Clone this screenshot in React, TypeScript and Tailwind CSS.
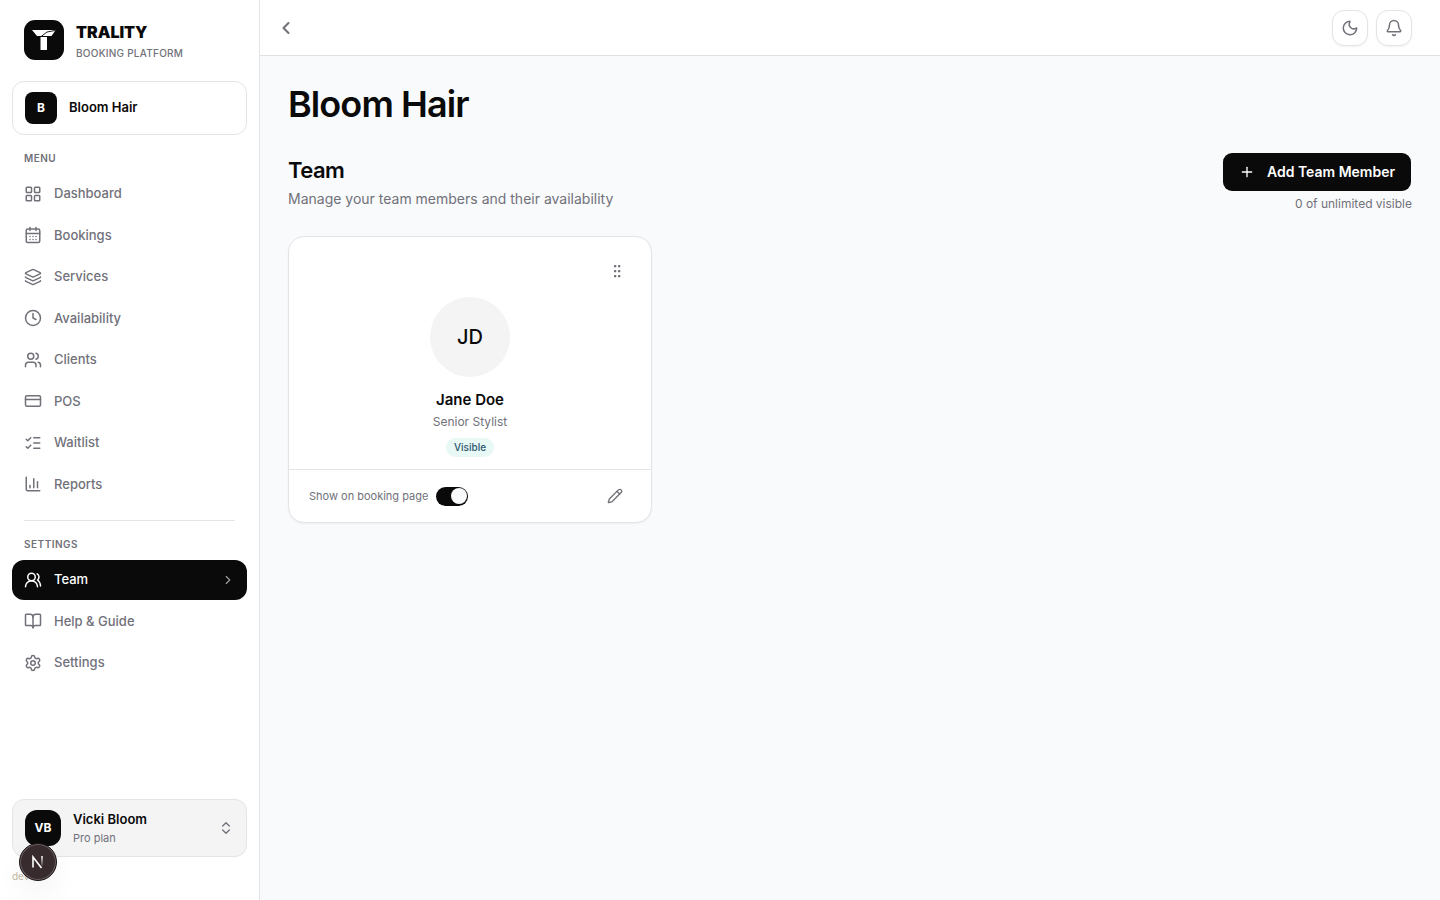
import { useState } from "react";
import {
  BookOpen,
  Bell,
  CalendarDays,
  ChartColumn,
  ChevronLeft,
  ChevronRight,
  ChevronsUpDown,
  Clock,
  CreditCard,
  Layers,
  LayoutGrid,
  ListChecks,
  Moon,
  Pencil,
  Plus,
  Settings,
  Users,
  UsersRound,
  type LucideIcon,
} from "lucide-react";

interface NavItem {
  label: string;
  icon: LucideIcon;
  active?: boolean;
}

const MENU: NavItem[] = [
  { label: "Dashboard", icon: LayoutGrid },
  { label: "Bookings", icon: CalendarDays },
  { label: "Services", icon: Layers },
  { label: "Availability", icon: Clock },
  { label: "Clients", icon: Users },
  { label: "POS", icon: CreditCard },
  { label: "Waitlist", icon: ListChecks },
  { label: "Reports", icon: ChartColumn },
];

const SETTINGS: NavItem[] = [
  { label: "Team", icon: UsersRound, active: true },
  { label: "Help & Guide", icon: BookOpen },
  { label: "Settings", icon: Settings },
];

function LogoMark() {
  return (
    <svg viewBox="0 0 40 40" className="size-10 shrink-0" aria-hidden="true">
      <rect width="40" height="40" rx="11" fill="#0a0a0a" />
      <path d="M8 10h23.700l-4.200 6H13z" fill="#fff" />
      <path d="M16.500 17h6.500v13h-6.500z" fill="#fff" />
      <path d="M17 16.600 23 12l8.500-1.600" stroke="#0a0a0a" strokeWidth=".9" fill="none" />
    </svg>
  );
}

function NavSection({ title, items }: { title: string; items: NavItem[] }) {
  return (
    <div>
      <h2 className="px-3 pb-2 text-[10px] leading-normal font-semibold tracking-wider text-[#71717a] uppercase">
        {title}
      </h2>
      <ul className="flex flex-col gap-0.5">
        {items.map(({ label, icon: Icon, active }) => (
          <li key={label}>
            <a
              href="#"
              aria-current={active ? "page" : undefined}
              className={`flex items-center gap-3 rounded-xl px-3 py-2.5 text-[13px] leading-normal font-medium ${
                active ? "bg-[#0a0a0a] text-white" : "text-[#71717a]"
              }`}
            >
              <Icon size={18} strokeWidth={2} />
              <span className="flex-1">{label}</span>
              {active && <ChevronRight size={14} className="opacity-60" />}
            </a>
          </li>
        ))}
      </ul>
    </div>
  );
}

function Sidebar() {
  return (
    <aside className="sticky top-0 flex h-screen w-[260px] shrink-0 flex-col border-r border-[#e4e4e7] bg-white px-3">
      <div className="flex items-start gap-3 px-3 pt-5 pb-5">
        <LogoMark />
        <div className="flex flex-col gap-px">
          <div className="text-base leading-6 font-black">TRALITY</div>
          <div className="text-[10px] leading-4 font-medium tracking-wide text-[#71717a]">
            BOOKING PLATFORM
          </div>
        </div>
      </div>

      <div className="flex items-center gap-3 rounded-xl border border-[#e4e4e7] px-3 py-2.5">
        <span className="flex size-8 items-center justify-center rounded-lg bg-[#0a0a0a] text-xs font-bold text-white">
          B
        </span>
        <span className="text-[13px] font-semibold">Bloom Hair</span>
      </div>

      <nav className="flex-1 pt-4">
        <NavSection title="Menu" items={MENU} />
        <hr className="mx-3 my-4 border-[#e4e4e7]" />
        <NavSection title="Settings" items={SETTINGS} />
      </nav>

      <button
        type="button"
        className="flex items-center gap-3 rounded-xl border border-[#e4e4e7] bg-[#f4f4f5] px-3 py-2.5 text-left"
      >
        <span className="flex size-9 items-center justify-center rounded-xl bg-[#0a0a0a] text-xs font-bold text-white">
          VB
        </span>
        <span className="flex-1">
          <span className="block text-[13px] leading-normal font-semibold">Vicki Bloom</span>
          <span className="block text-[11px] leading-normal text-[#71717a]">Pro plan</span>
        </span>
        <ChevronsUpDown size={16} strokeWidth={2} className="text-[#71717a]" />
      </button>
      <p className="pt-3 pb-4 text-[10px] leading-normal text-[#c3b9a3]">dev</p>
    </aside>
  );
}

function DevBadge() {
  return (
    <button
      type="button"
      aria-label="Open dev tools"
      className="fixed bottom-[19px] left-[19px] flex size-[38px] items-center justify-center rounded-full border border-[#1b1415] bg-[#382b2d] shadow-[inset_0_0_0_1px_#6b6163,0_12px_28px_rgba(0,0,0,0.05)]"
    >
      <svg width="14" height="14" viewBox="0 0 14 14" fill="none" aria-hidden="true">
        <defs>
          <linearGradient id="stem" x1="0" y1="1" x2="0" y2="12" gradientUnits="userSpaceOnUse">
            <stop stopColor="#fff" />
            <stop offset="1" stopColor="#fff" stopOpacity="0" />
          </linearGradient>
        </defs>
        <path d="M2 12.500V2l8.500 11" stroke="#fff" strokeWidth="1.600" />
        <path d="M11 1v11" stroke="url(#stem)" strokeWidth="1.600" />
      </svg>
    </button>
  );
}

function TopBar() {
  const iconButton =
    "flex size-9 items-center justify-center rounded-xl border border-[#e4e4e7] bg-white text-[#71717a] shadow-xs";

  return (
    <header className="flex h-14 items-center justify-between border-b border-[#dfe1e5] bg-white pr-7 pl-4">
      <button type="button" aria-label="Back" className="text-[#71717a]">
        <ChevronLeft size={20} strokeWidth={2.5} />
      </button>
      <div className="flex gap-2">
        <button type="button" aria-label="Toggle theme" className={iconButton}>
          <Moon size={18} strokeWidth={2} />
        </button>
        <button type="button" aria-label="Notifications" className={iconButton}>
          <Bell size={18} strokeWidth={2} />
        </button>
      </div>
    </header>
  );
}

function GripDots() {
  return (
    <svg width="8" height="14" viewBox="0 0 8 14" fill="currentColor" aria-hidden="true">
      {[1, 6, 11].map((y) => (
        <g key={y}>
          <rect x="1" y={y} width="2.300" height="2.300" rx=".6" />
          <rect x="5" y={y} width="2.300" height="2.300" rx=".6" />
        </g>
      ))}
    </svg>
  );
}

function MemberCard({ name, role, initials }: { name: string; role: string; initials: string }) {
  const [shown, setShown] = useState(true);

  return (
    <article className="rounded-2xl border border-[#e4e4e7] bg-white shadow-xs">
      <div className="flex flex-col items-center px-5 pt-5 pb-3">
        <button
          type="button"
          aria-label="Reorder"
          className="flex size-7 items-center justify-center self-end text-[#71717a]"
        >
          <GripDots />
        </button>
        <div className="mt-3 flex size-20 items-center justify-center rounded-full bg-[#f4f4f5] text-xl font-medium">
          {initials}
        </div>
        <h3 className="mt-3 text-[15px] leading-[22px] font-semibold">{name}</h3>
        <p className="mt-0.5 text-xs leading-[18px] text-[#71717a]">{role}</p>
        <span className="mt-[7px] rounded-full bg-[#e7f8f5] px-2 py-0.5 text-[10px] leading-[15px] font-medium text-[#2c5670]">
          Visible
        </span>
      </div>
      <div className="flex items-center justify-between border-t border-[#e4e4e7] px-5 py-2.5">
        <label className="flex items-center gap-2 text-[11px] text-[#71717a]">
          Show on booking page
          <input
            type="checkbox"
            role="switch"
            checked={shown}
            onChange={(e) => setShown(e.target.checked)}
            className="flex h-[19px] w-8 appearance-none items-center rounded-full bg-[#d4d4d8] px-px before:size-4 before:rounded-full before:bg-[#f9fafc] checked:justify-end checked:bg-[#0a0a0a]"
          />
        </label>
        <button
          type="button"
          aria-label={`Edit ${name}`}
          className="flex size-8 items-center justify-center text-[#71717a]"
        >
          <Pencil size={16} strokeWidth={2} />
        </button>
      </div>
    </article>
  );
}

export default function App() {
  return (
    <div className="flex min-h-screen bg-[#f9fafc] font-[Inter,sans-serif] text-[#0a0a0a]">
      <Sidebar />
      <div className="min-w-0 flex-1">
        <TopBar />
        <main className="p-7">
          <h1 className="text-4xl leading-10 font-semibold tracking-tight">Bloom Hair</h1>
          <div className="mt-7 flex items-start justify-between">
            <div>
              <h2 className="text-[22px] leading-9 font-semibold tracking-tight">Team</h2>
              <p className="text-sm leading-[22px] text-[#71717a]">
                Manage your team members and their availability
              </p>
            </div>
            <div className="flex flex-col items-end gap-1">
              <button
                type="button"
                className="flex h-10 items-center gap-3 rounded-[10px] border border-transparent bg-[#0a0a0a] bg-clip-padding px-4 text-sm font-semibold text-white"
              >
                <Plus size={16} strokeWidth={2} />
                Add Team Member
              </button>
              <p className="text-xs text-[#71717a]">0 of unlimited visible</p>
            </div>
          </div>
          <div className="mt-6 grid grid-cols-3 gap-4">
            <MemberCard name="Jane Doe" role="Senior Stylist" initials="JD" />
          </div>
        </main>
      </div>
      <DevBadge />
    </div>
  );
}
